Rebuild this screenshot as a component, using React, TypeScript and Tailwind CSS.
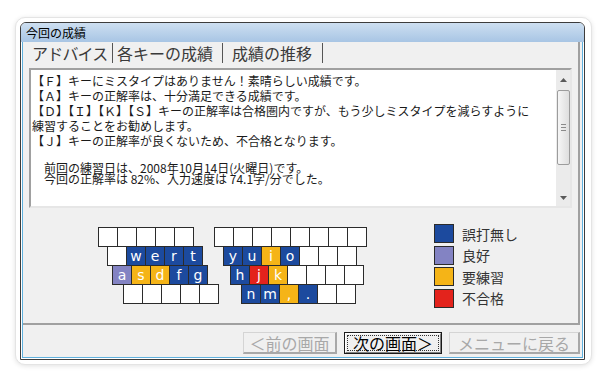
import React from "react";

type Tone = "w" | "b" | "p" | "y" | "r";
type Key = [string, Tone];

const TONE: Record<Tone, string> = {
  w: "bg-white",
  b: "bg-[#1c4a9e] text-white",
  p: "bg-[#8383c3] text-white",
  y: "bg-[#f5b417] text-white",
  r: "bg-[#e3231c] text-white",
};

const blank = (n: number): Key[] => Array.from({ length: n }, () => ["", "w"] as Key);

const ROWS: { ml: string; gap: string; left: Key[]; right: Key[] }[] = [
  { ml: "ml-0", gap: "ml-[20px]", left: blank(5), right: blank(8) },
  {
    ml: "ml-[9px]",
    gap: "ml-[20px]",
    left: [["", "w"], ["w", "b"], ["e", "b"], ["r", "b"], ["t", "b"]],
    right: [["y", "b"], ["u", "b"], ["i", "y"], ["o", "b"], ...blank(3)],
  },
  {
    ml: "ml-[14px]",
    gap: "ml-[22px]",
    left: [["a", "p"], ["s", "y"], ["d", "y"], ["f", "b"], ["g", "b"]],
    right: [["h", "b"], ["j", "r"], ["k", "y"], ...blank(4)],
  },
  {
    ml: "ml-[25px]",
    gap: "ml-[22px]",
    left: blank(5),
    right: [["n", "b"], ["m", "b"], [",", "y"], [".", "b"], ...blank(2)],
  },
];

const LEGEND: { label: string; cls: string }[] = [
  { label: "誤打無し", cls: "bg-[#1c4a9e]" },
  { label: "良好", cls: "bg-[#8383c3]" },
  { label: "要練習", cls: "bg-[#f5b417]" },
  { label: "不合格", cls: "bg-[#e3231c]" },
];

export default function App() {
  return (
    <div className="w-[608px] h-[382px] bg-white pl-[15px] pt-[17px] font-['Noto_Sans_CJK_JP','Noto_Sans_CJK_SC',sans-serif]">
      <div className="w-[577px] h-[348px] rounded-[10px] bg-white border border-[#e4e4e4] shadow-[0_1px_5px_rgba(0,0,0,0.12)] pl-[4px] pt-[4px]">
        <div className="w-[565px] h-[338px] border border-[#3c3c3c] rounded-t-[6px] flex flex-col overflow-hidden">
          <div className="h-[19px] shrink-0 flex items-center pl-[5px] bg-linear-to-b from-[#cddff1] to-[#a8c5e4] text-[12px] leading-none text-black">
            今回の成績
          </div>
          <div className="flex-1 flex flex-col border-x border-b border-white">
            <div className="flex-1 flex flex-col border-x border-b border-[#5fb0dd] bg-[#f0f0f0]">
              <ResultPanel />
              <div className="flex-1 flex justify-end items-start pt-[7px] pr-[2px] gap-[7px]">
                <DisabledButton width="w-[94px]">＜前の画面</DisabledButton>
                <FocusedButton>次の画面＞</FocusedButton>
                <DisabledButton width="w-[131px]">メニューに戻る</DisabledButton>
              </div>
            </div>
          </div>
        </div>
      </div>
    </div>
  );
}

function ResultPanel() {
  return (
    <div className="h-[283px] w-[557px] shrink-0 border-r-2 border-b-2 border-[#a0a0a0] flex flex-col">
      <div className="h-[22px] flex items-center pl-[8px] text-[16px] leading-none text-[#3a3a3a]">
        <span className="w-[82px] h-[20px] flex items-center pl-[1px] tracking-[-0.8px] border-r border-[#555]">アドバイス</span>
        <span className="w-[110px] h-[20px] flex items-center pl-[4px] border-r border-[#555]">各キーの成績</span>
        <span className="w-[100px] h-[20px] flex items-center pl-[9px] border-r border-[#555]">成績の推移</span>
      </div>

      <div className="ml-[6px] mt-[4px] w-[543px] h-[140px] border-2 border-t-[#a0a0a0] border-l-[#a0a0a0] border-r-[#e6e6e6] border-b-[#e6e6e6] bg-white flex">
        <div className="flex-1 pl-[1px] pt-[3px] text-[12px] text-[#1a1a1a] whitespace-nowrap overflow-hidden">
          <div className="h-[15px] leading-[15px]">【Ｆ】キーにミスタイプはありません！素晴らしい成績です。</div>
          <div className="h-[15px] leading-[15px]">【Ａ】キーの正解率は、十分満足できる成績です。</div>
          <div className="h-[15px] leading-[15px]">【Ｄ】【Ｉ】【Ｋ】【Ｓ】キーの正解率は合格圏内ですが、もう少しミスタイプを減らすように</div>
          <div className="h-[15px] leading-[15px]">練習することをお勧めします。</div>
          <div className="h-[15px] leading-[15px]">【Ｊ】キーの正解率が良くないため、不合格となります。</div>
          <div className="h-[14px]" />
          <div className="h-[12px] leading-[12px]">　前回の練習日は、2008年10月14日(火曜日)です。</div>
          <div className="h-[10px] leading-[10px]">　今回の正解率は 82%、入力速度は 74.1字/分でした。</div>
        </div>
        <Scrollbar />
      </div>

      <div className="flex items-start mt-[16px]">
        <div className="ml-[75px] w-[270px] mt-[3px]">
          {ROWS.map((row, i) => (
            <div key={i} className={`-mt-px first:mt-0 flex ${row.ml}`}>
              <KeyGroup keys={row.left} />
              <div className={row.gap}>
                <KeyGroup keys={row.right} />
              </div>
            </div>
          ))}
        </div>
        <div className="ml-[66px] flex flex-col gap-[2.6px]">
          {LEGEND.map((l) => (
            <div key={l.label} className="flex items-center h-[19px]">
              <div className={`w-[20px] h-[19px] border border-[#2b2b2b] ${l.cls}`} />
              <span className="ml-[8px] text-[14px] leading-none text-[#333]">{l.label}</span>
            </div>
          ))}
        </div>
      </div>
    </div>
  );
}

function KeyGroup({ keys }: { keys: Key[] }) {
  return (
    <div className="flex">
      {keys.map(([ch, tone], i) => (
        <div
          key={i}
          className={`-ml-px first:ml-0 w-[20px] h-[20px] flex items-center justify-center border border-[#2b2b2b] text-[14px] leading-none font-['DejaVu_Sans',sans-serif] ${TONE[tone]}`}
        >
          {ch}
        </div>
      ))}
    </div>
  );
}

function Scrollbar() {
  return (
    <div className="w-[14px] bg-[#ebebeb] flex flex-col items-center">
      <div className="h-[20px] w-full flex items-center justify-center">
        <svg width="7" height="4" viewBox="0 0 7 4">
          <path d="M0 4 L3.5 0 L7 4 Z" fill="#5a5a5a" />
        </svg>
      </div>
      <div className="w-[13px] h-[75px] rounded-[2px] border border-[#9c9c9c] bg-linear-to-r from-[#f6f6f6] to-[#dedede] flex flex-col items-center justify-center gap-[2px]">
        <div className="w-[5px] h-px bg-[#8a8a8a]" />
        <div className="w-[5px] h-px bg-[#8a8a8a]" />
        <div className="w-[5px] h-px bg-[#8a8a8a]" />
      </div>
      <div className="flex-1" />
      <div className="h-[16px] w-full flex items-center justify-center">
        <svg width="7" height="4" viewBox="0 0 7 4">
          <path d="M0 0 L3.5 4 L7 0 Z" fill="#5a5a5a" />
        </svg>
      </div>
    </div>
  );
}

function DisabledButton({ width, children }: { width: string; children: React.ReactNode }) {
  return (
    <div
      className={`${width} h-[22px] flex items-center justify-center border-t border-l border-t-[#d4d4d4] border-l-[#d4d4d4] border-r-2 border-b-2 border-r-[#a8a8a8] border-b-[#a8a8a8] text-[16px] leading-none text-[#a8a8a8]`}
    >
      {children}
    </div>
  );
}

function FocusedButton({ children }: { children: React.ReactNode }) {
  return (
    <div className="w-[98px] h-[22px] border border-[#1a1a1a] flex">
      <div className="flex-1 border-t border-l border-white border-r border-b border-r-[#808080] border-b-[#808080] p-[1px] flex">
        <div className="flex-1 border border-dotted border-[#333] flex items-center justify-center text-[16px] leading-none text-black">
          {children}
        </div>
      </div>
    </div>
  );
}
